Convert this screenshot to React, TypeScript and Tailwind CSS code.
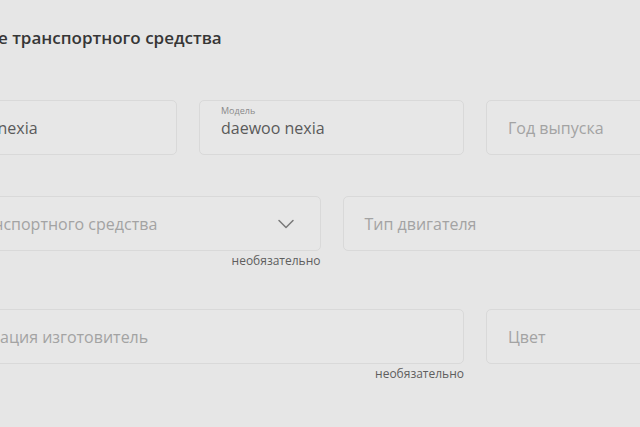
import React from 'react';
import { ChevronDown } from 'lucide-react';

interface FieldProps {
  label?: string;
  value?: string;
  placeholder: string;
  select?: boolean;
  hint?: string;
  span: string;
}

const Field: React.FC<FieldProps> = ({ label, value, placeholder, select, hint, span }) => {
  return (
    <div className={`${span} flex flex-col`}>
      <div className="relative h-[55px] rounded-[5px] border border-[#d9d9d9] bg-[#e7e7e7] px-[21px] flex items-center">
        {value ? (
          <>
            {/* floating label over the filled value */}
            <span className="absolute left-[21px] top-[4px] text-[9px] leading-[11px] text-[#8a8a8a]">
              {label}
            </span>
            <span className="text-[16px] leading-[20px] text-[#5a5a5a]">{value}</span>
          </>
        ) : (
          <span className="text-[16px] leading-[20px] text-[#a3a3a3]">{placeholder}</span>
        )}
        {select && (
          <ChevronDown
            className="absolute right-[20px] top-1/2 -translate-y-1/2 text-[#7a7a7a]"
            size={28}
            strokeWidth={1.3}
          />
        )}
      </div>
      {hint && (
        <span className="self-end mt-[3px] text-[12px] leading-[14px] text-[#5e5e5e]">{hint}</span>
      )}
    </div>
  );
};

export default function App() {
  return (
    <div
      className="min-h-[427px] w-[640px] overflow-hidden bg-[#e6e6e6] pt-[26px]"
      style={{ fontFamily: '"Open Sans", "Noto Sans", sans-serif' }}
    >
      <div className="-ml-[88px] w-[839px]">
        {/* Section heading */}
        <h2 className="pl-[28px] text-[17px] leading-[24px] font-semibold text-[#363636]">
          Данные транспортного средства
        </h2>

        <div className="mt-[50px] grid grid-cols-6 gap-x-[22px] gap-y-[41px]">
          <Field span="col-span-2" label="Марка" value="daewoo nexia" placeholder="Марка" />
          <Field span="col-span-2" label="Модель" value="daewoo nexia" placeholder="Модель" />
          <Field span="col-span-2" placeholder="Год выпуска" />

          <Field
            span="col-span-3"
            placeholder="Тип транспортного средства"
            select
            hint="необязательно"
          />
          <Field span="col-span-3" placeholder="Тип двигателя" />

          <Field span="col-span-4" placeholder="Организация изготовитель" hint="необязательно" />
          <Field span="col-span-2" placeholder="Цвет" />
        </div>
      </div>
    </div>
  );
}
